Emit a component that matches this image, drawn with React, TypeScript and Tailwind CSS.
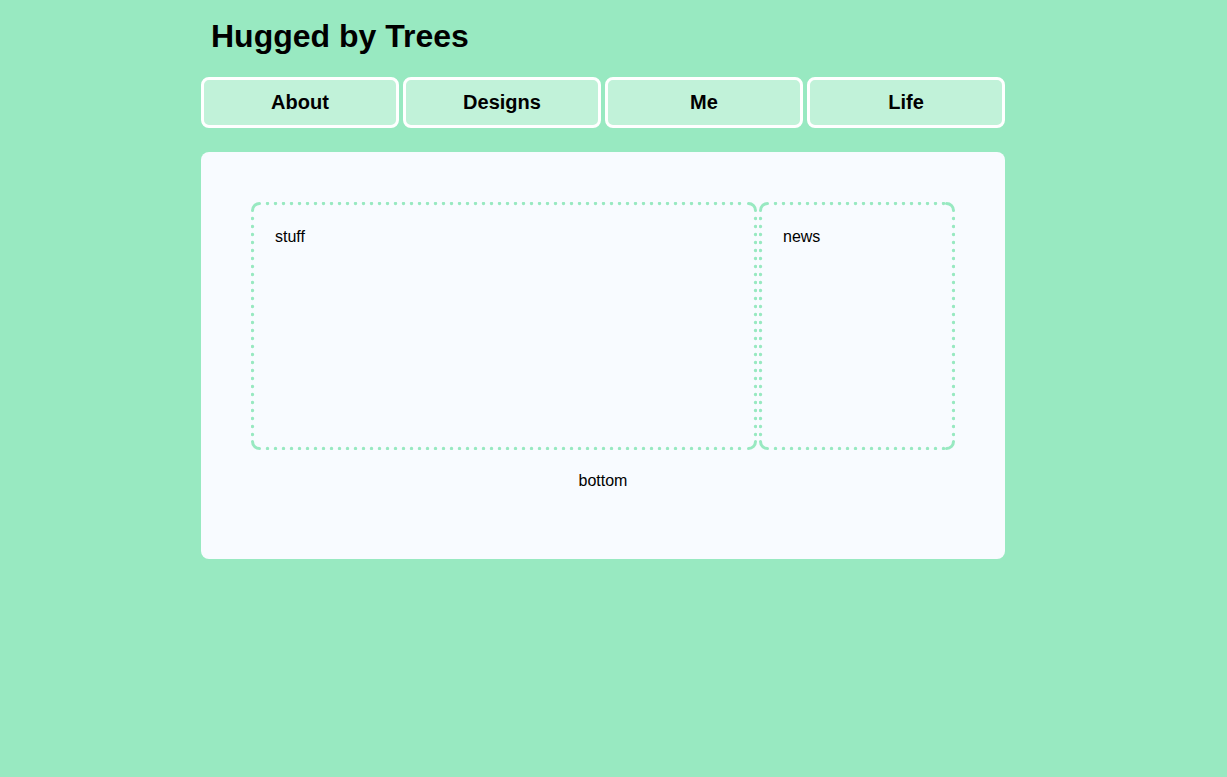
function DottedBox({ w, h, label }: { w: number; h: number; label: string }) {
  const i = 1.5;
  const r = 7;
  const c = "#98e9c1";
  const L = i, T = i, R = w - i, B = h - i;
  return (
    <div className="relative px-[24px] pt-[26px] text-[16px] leading-[18px]" style={{ width: w, height: h }}>
      <svg className="pointer-events-none absolute left-0 top-0" width={w} height={h}>
        <g stroke={c} strokeWidth={3} fill="none" strokeLinecap="round">
          <path d={`M${L} ${T + r} A${r} ${r} 0 0 1 ${L + r} ${T}`} />
          <path d={`M${R - r} ${T} A${r} ${r} 0 0 1 ${R} ${T + r}`} />
          <path d={`M${R} ${B - r} A${r} ${r} 0 0 1 ${R - r} ${B}`} />
          <path d={`M${L + r} ${B} A${r} ${r} 0 0 1 ${L} ${B - r}`} />
          <g strokeDasharray="0 8" strokeWidth={3.4}>
            <path d={`M${L + r + 8} ${T} H${R - r - 2}`} />
            <path d={`M${L + r + 8} ${B} H${R - r - 2}`} />
            <path d={`M${L} ${T + r + 8} V${B - r - 2}`} />
            <path d={`M${R} ${T + r + 8} V${B - r - 2}`} />
          </g>
        </g>
      </svg>
      {label}
    </div>
  );
}

export default function App() {
  const tabs = ["About", "Designs", "Me", "Life"];
  return (
    <div
      className="min-h-[777px] w-full bg-[#98e9c1] text-black"
      style={{ fontFamily: '"Liberation Sans", Arial, sans-serif' }}
    >
      <div className="ml-[201px] w-[804px] pt-[18px]">
        <h1 className="pl-[10px] text-[32px] font-bold leading-[37px]">Hugged by Trees</h1>
        <nav className="mt-[22px] flex gap-[4px]">
          {tabs.map((t) => (
            <div
              key={t}
              className="flex h-[51px] w-[198px] items-center justify-center rounded-[8px] border-[3px] border-white bg-[#c1f2d9] pb-[1px] text-[20px] font-bold"
            >
              {t}
            </div>
          ))}
        </nav>
        <main className="mt-[24px] rounded-[8px] bg-[#f8fbff] px-[50px] pt-[50px] pb-[69px]">
          <div className="flex gap-[2px]">
            <DottedBox w={506} h={248} label="stuff" />
            <DottedBox w={196} h={248} label="news" />
          </div>
          <div className="mt-[22px] text-center text-[16px] leading-[18px]">bottom</div>
        </main>
      </div>
    </div>
  );
}
